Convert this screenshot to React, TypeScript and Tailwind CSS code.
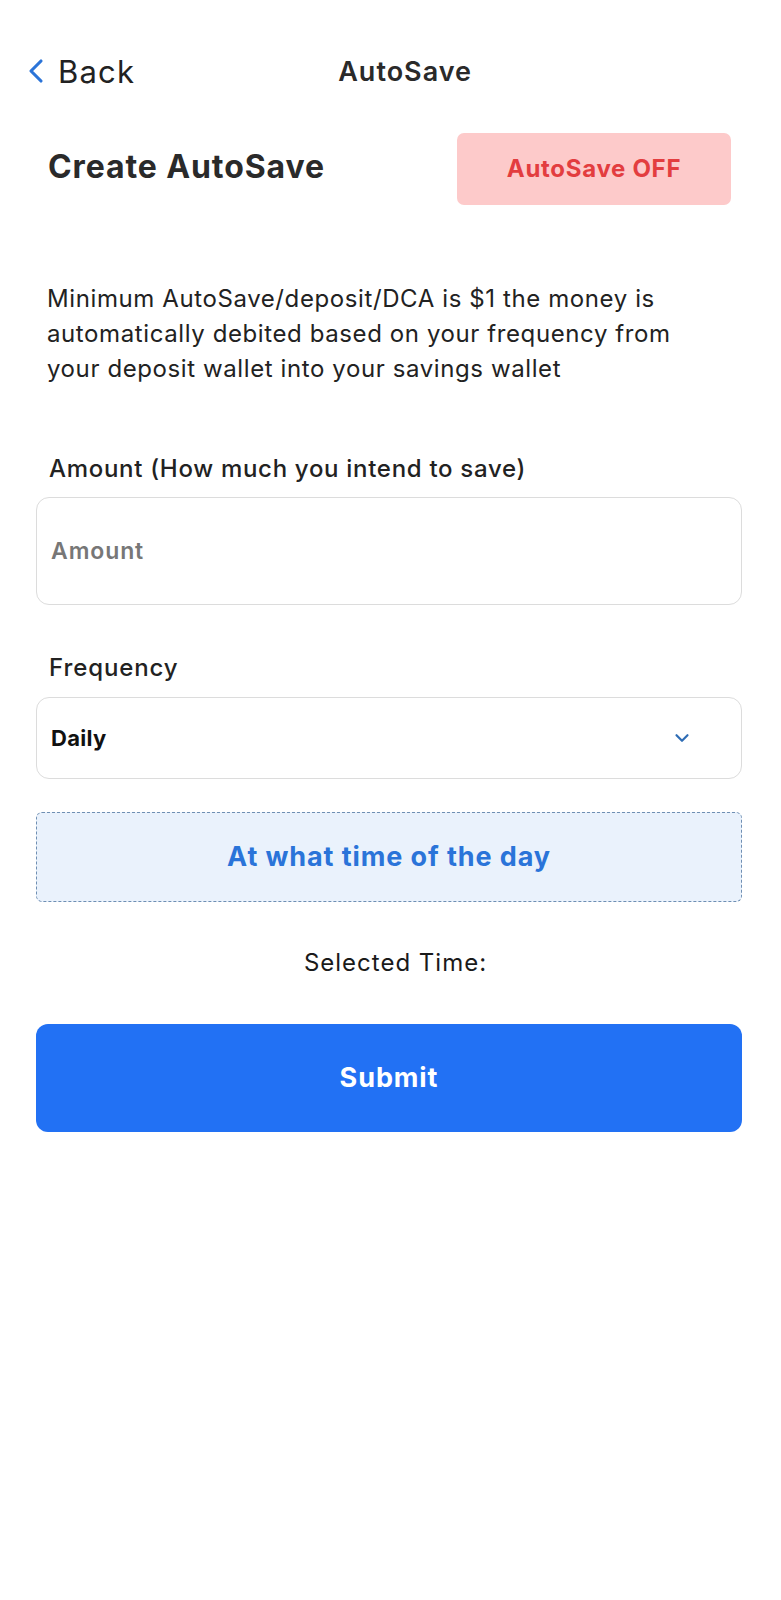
import { ChevronLeft, ChevronDown } from "lucide-react";

export default function App() {
  return (
    <div
      className="min-h-[1600px] w-full bg-white text-[#222]"
      style={{ fontFamily: "Inter, 'Noto Sans', sans-serif" }}
    >
      {/* header */}
      <div className="flex h-[60px] items-center pt-[41px] pl-[16px] box-content">
        <div className="flex items-center">
          <ChevronLeft className="h-[40px] w-[40px] text-[#2b74d8]" strokeWidth={1.9} />
          <span className="ml-[2px] text-[31px] leading-none tracking-[1.2px] text-[#222]">Back</span>
        </div>
        <h1 className="ml-[203px] text-[27px] font-semibold leading-none tracking-[1px] text-[#2a2a2a]">AutoSave</h1>
      </div>

      <div className="pl-[36px] pr-[39px]">
        <div className="mt-[28px] flex items-center justify-between pl-[12px] pr-[11px]">
          <h2 className="text-[32px] font-bold leading-none tracking-[0.9px] text-[#2a2a2a]">Create AutoSave</h2>
          <div className="mt-[4px] flex h-[72px] w-[274px] items-center justify-center rounded-[7px] bg-[#fdcaca]">
            <span className="text-[24px] font-bold tracking-[0.7px] text-[#e33d3f]">AutoSave OFF</span>
          </div>
        </div>

        <p className="mt-[76px] max-w-[660px] pl-[11px] text-[24px] leading-[35px] tracking-[0.6px] text-[#222]">
          Minimum AutoSave/deposit/DCA is $1 the money is automatically debited based on your frequency from your deposit wallet into your savings wallet
        </p>

        <label className="mt-[68px] block pl-[13px] text-[24px] font-medium leading-[30px] tracking-[0.7px] text-[#222]">
          Amount (How much you intend to save)
        </label>
        <div className="mt-[13px] flex h-[108px] items-center rounded-[13px] border border-[#dcdcdc] px-[14px]">
          <span className="text-[23px] font-semibold tracking-[0.9px] text-[#777]">Amount</span>
        </div>

        <label className="mt-[48px] block pl-[13px] text-[24px] font-medium leading-[30px] tracking-[0.9px] text-[#222]">
          Frequency
        </label>
        <div className="mt-[14px] flex h-[82px] items-center justify-between rounded-[13px] border border-[#dcdcdc] pl-[14px] pr-[48px]">
          <span className="text-[22px] font-bold tracking-[0.3px] text-[#111]">Daily</span>
          <ChevronDown className="h-[22px] w-[22px] text-[#2f6db5]" strokeWidth={2.4} />
        </div>

        <div className="mt-[33px] flex h-[90px] items-center justify-center rounded-[6px] border border-dashed border-[#6f8fb3] bg-[#eaf2fc]">
          <span className="text-[27px] font-bold tracking-[0.9px] text-[#2a74d9]">At what time of the day</span>
        </div>

        <p className="mt-[46px] pl-[13px] text-center text-[24px] leading-[30px] tracking-[1px] text-[#1a1a1a]">Selected Time:</p>

        <button className="mt-[46px] flex h-[108px] w-full items-center justify-center rounded-[12px] bg-[#2271f4]">
          <span className="text-[27px] font-bold tracking-[0.9px] text-white">Submit</span>
        </button>
      </div>
    </div>
  );
}
